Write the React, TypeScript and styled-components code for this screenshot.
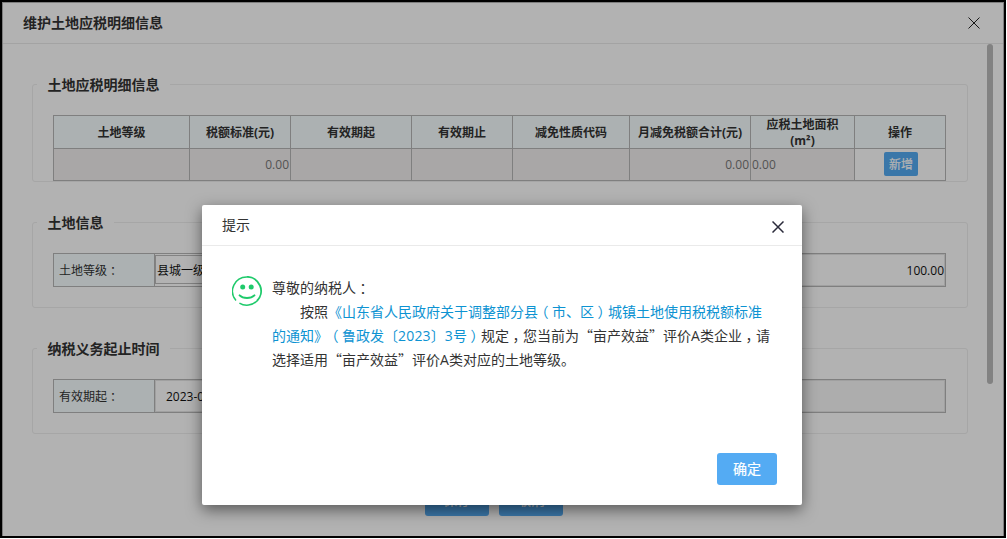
import React from "react";
import styled, { createGlobalStyle } from "styled-components";

const GlobalStyle = createGlobalStyle`
  * { box-sizing: border-box; }
  body {
    margin: 0;
    background: #fff;
    overflow: hidden;
    color: #333;
    font: 14px/24px "Open Sans", "Noto Sans CJK SC", sans-serif;
    text-spacing-trim: space-all;
  }
`;

const Screen = styled.div`
  position: relative;
  width: 1006px;
  height: 538px;
  padding: 2px;
  background: #000;
  overflow: hidden;
`;

const Panel = styled.main`
  display: flex;
  flex-direction: column;
  width: 1002px;
  height: 534px;
  border: 1px solid #b4b4b4;
  border-bottom: 0;
  background: #fff;
`;

const TitleBar = styled.header<{ $inset: number; $bold?: boolean }>`
  display: flex;
  align-items: center;
  justify-content: space-between;
  flex: none;
  height: 41px;
  padding: 0 ${(p) => p.$inset}px 0 20px;
  border-bottom: 1px solid #eaeaea;
  font-weight: ${(p) => (p.$bold ? 700 : 400)};
`;

const Body = styled.div`
  display: flex;
  justify-content: space-between;
  flex: 1;
  padding-right: 10px;
`;

const Content = styled.div`
  display: flex;
  flex-direction: column;
  width: 936px;
  margin-left: 29px;
  padding-top: 29px;
`;

const ScrollThumb = styled.div`
  width: 6px;
  height: 340px;
  border-radius: 3px;
  background: #bababa;
`;

const Group = styled.fieldset<{ $height: number; $gap: number }>`
  flex: none;
  width: 936px;
  height: ${(p) => p.$height}px;
  margin: 0 0 ${(p) => p.$gap}px;
  padding: 20px 20px 0;
  border: 1px solid #eee;
  border-radius: 3px;
`;

const Legend = styled.legend`
  height: 22px;
  margin-left: -16px;
  padding: 0 10px 0 10.5px;
  font-weight: 700;
`;

const Table = styled.table`
  width: 893px;
  border-collapse: collapse;
  table-layout: fixed;
  font-size: 12px;
  line-height: 16px;
`;

const HeadCell = styled.th`
  height: 33px;
  padding: 1px 0 0;
  border: 1px solid #b7b7b7;
  background: #f6feff;
  font-weight: 700;
  line-height: 15.5px;
`;

const Cell = styled.td<{ $align?: string; $plain?: boolean }>`
  height: 32px;
  padding: 0 ${(p) => (p.$plain ? 0 : 1)}px;
  border: 1px solid #b7b7b7;
  background: ${(p) => (p.$plain ? "#fff" : "#f3eff0")};
  color: #777;
  text-align: ${(p) => p.$align ?? "left"};
`;

const AddButton = styled.button`
  display: block;
  width: 34px;
  height: 24px;
  margin: -1px 0 0 29px;
  padding: 0;
  border: 0;
  border-radius: 2px;
  background: #54abf3;
  color: #fff;
  font: 12px/24px "Noto Sans CJK SC", sans-serif;
  -webkit-text-stroke: 0.2px #fff;
`;

const FormRow = styled.div`
  display: flex;
  width: 893px;
  height: 34px;
  border: 1px solid #b7b7b7;
  font-size: 12px;
`;

const Label = styled.div`
  width: 101px;
  padding: 5px 5px 3px;
  border-right: 1px solid #b7b7b7;
  background: #f6feff;
`;

const Field = styled.div<{ $inset?: number; $boxed?: boolean; $readOnly?: boolean; $right?: boolean }>`
  flex: 1;
  margin: ${(p) => (p.$boxed ? "1px 0 2px" : "0")};
  padding: ${(p) => (p.$boxed ? 3 : 4)}px ${(p) => (p.$right ? 0 : p.$inset ?? 1)}px 0;
  border: 1px solid ${(p) => (p.$boxed ? "#bbb" : "#e6e6e6")};
  background: ${(p) => (p.$readOnly ? "#f8f8f8" : "#fff")};
  color: #111;
  text-align: ${(p) => (p.$right ? "right" : "left")};
`;

const Actions = styled.div`
  display: flex;
  gap: 10px;
  margin: 50px 0 0 393px;
`;

const Button = styled.button<{ $width: number }>`
  width: ${(p) => p.$width}px;
  height: 32px;
  padding: 0 0 2px;
  border: 0;
  border-radius: 3px;
  background: #54abf3;
  color: #fff;
  font: 14px/30px "Noto Sans CJK SC", sans-serif;
  -webkit-text-stroke: 0.2px #fff;
`;

const Overlay = styled.div`
  position: absolute;
  inset: 0;
  background: rgba(0, 0, 0, 0.3);
`;

const Dialog = styled.section`
  position: absolute;
  left: 202px;
  top: 205px;
  display: flex;
  flex-direction: column;
  width: 600px;
  height: 300px;
  border-radius: 2px;
  background: #fff;
  box-shadow: 0 5px 15px rgba(0, 0, 0, 0.5);
`;

const Message = styled.div`
  display: flex;
  flex: 1;
  gap: 10px;
  padding: 30px 0 0 30px;
`;

const Text = styled.div`
  white-space: nowrap;
`;

const Line = styled.div<{ $indent?: boolean }>`
  height: 24px;
  padding-left: ${(p) => (p.$indent ? 28 : 0)}px;
`;

const Link = styled.span`
  color: #0d93d2;
`;

const Quote = styled.span`
  font-family: "Noto Sans CJK SC", sans-serif;
  line-height: 1;
`;

/* Half-width punctuation centred in a full-width cell */
const Mark = styled.span`
  margin: 0 0.25em;
  font-feature-settings: "halt";
`;

const Latin = styled.span`
  letter-spacing: 0.2px;
`;

const Footer = styled.footer`
  display: flex;
  justify-content: flex-end;
  padding: 0 25px 20px;
`;

const CloseIcon = styled.svg<{ $drop?: number }>`
  margin-top: ${(p) => p.$drop ?? 0}px;
`;

const Close = ({ width, color, drop }: { width: number; color: string; drop?: number }) => (
  <CloseIcon $drop={drop} width="12" height="12" viewBox="0 0 12 12" stroke={color} strokeWidth={width}>
    <path d="M.5.5l11 11M11.5.5l-11 11" />
  </CloseIcon>
);

const Smile = () => (
  <svg width="30" height="30" viewBox="0 0 30 30" fill="none" stroke="#1fca6b" strokeLinecap="butt">
    <path d="M4 24.4A14.2 14.2 0 0 1 15 .9" strokeWidth="1.5" />
    <path d="M15 .9A14.1 14.1 0 0 1 24.9 25" strokeWidth="1.9" />
    <path d="M24.9 25A14.2 14.2 0 0 1 7.4 27.1" strokeWidth="1.5" />
    <path d="M7.6 19.4c3.6 3.6 11.2 3.6 14.8 0" strokeWidth="2" strokeLinecap="round" />
    <circle cx="10.7" cy="11" r="2.5" fill="#1fca6b" stroke="none" />
    <circle cx="19.2" cy="11" r="2.5" fill="#1fca6b" stroke="none" />
  </svg>
);

const columns: [React.ReactNode, number][] = [
  ["土地等级", 136],
  ["税额标准(元)", 101],
  ["有效期起", 121],
  ["有效期止", 101],
  ["减免性质代码", 117],
  ["月减免税额合计(元)", 121],
  [<>应税土地面积<br />(m²)</>, 104],
  ["操作", 91],
];

export default function App() {
  return (
    <Screen>
      <GlobalStyle />
      <Panel>
        <TitleBar $inset={23} $bold>
          维护土地应税明细信息
          <Close width={1} color="#222" />
        </TitleBar>
        <Body>
          <Content>
            <Group $height={109} $gap={29}>
              <Legend>土地应税明细信息</Legend>
              <Table>
                <colgroup>
                  {columns.map(([, width], i) => (
                    <col key={i} style={{ width }} />
                  ))}
                </colgroup>
                <thead>
                  <tr>
                    {columns.map(([title], i) => (
                      <HeadCell key={i}>{title}</HeadCell>
                    ))}
                  </tr>
                </thead>
                <tbody>
                  <tr>
                    <Cell />
                    <Cell $align="right">0.00</Cell>
                    <Cell />
                    <Cell />
                    <Cell />
                    <Cell $align="right">0.00</Cell>
                    <Cell>0.00</Cell>
                    <Cell $plain>
                      <AddButton>新增</AddButton>
                    </Cell>
                  </tr>
                </tbody>
              </Table>
            </Group>
            <Group $height={97} $gap={29}>
              <Legend>土地信息</Legend>
              <FormRow>
                <Label>土地等级<Mark>：</Mark></Label>
                <Field $boxed>县城一级</Field>
                <Field $right>100.00</Field>
              </FormRow>
            </Group>
            <Group $height={97} $gap={0}>
              <Legend>纳税义务起止时间</Legend>
              <FormRow>
                <Label>有效期起<Mark>：</Mark></Label>
                <Field $inset={10}>2023-01</Field>
                <Field $readOnly />
              </FormRow>
            </Group>
            <Actions>
              <Button $width={64}>保存</Button>
              <Button $width={64}>取消</Button>
            </Actions>
          </Content>
          <ScrollThumb />
        </Body>
      </Panel>
      <Overlay />
      <Dialog>
        <TitleBar $inset={18}>
          提示
          <Close width={1.5} color="#2b2b3b" drop={3} />
        </TitleBar>
        <Message>
          <Smile />
          <Text>
            <Line>尊敬的纳税人<Mark>：</Mark></Line>
            <Line $indent>
              按照
              <Link>
                《山东省人民政府关于调整部分县<Mark>（</Mark>市、区<Mark>）</Mark>
                城镇土地使用税税额标准
              </Link>
            </Line>
            <Line>
              <Link>
                的通知》<Mark>（</Mark>鲁政发〔<Latin>2023</Latin>〕<Latin>3</Latin>号
                <Mark>）</Mark>
              </Link>
              规定<Mark>，</Mark>您当前为<Quote>“</Quote>亩产效益<Quote>”</Quote>评价
              <Latin>A</Latin>类企业<Mark>，</Mark>请
            </Line>
            <Line>
              选择适用<Quote>“</Quote>亩产效益<Quote>”</Quote>评价<Latin>A</Latin>类对应的土地等级。
            </Line>
          </Text>
        </Message>
        <Footer>
          <Button $width={60}>确定</Button>
        </Footer>
      </Dialog>
    </Screen>
  );
}
